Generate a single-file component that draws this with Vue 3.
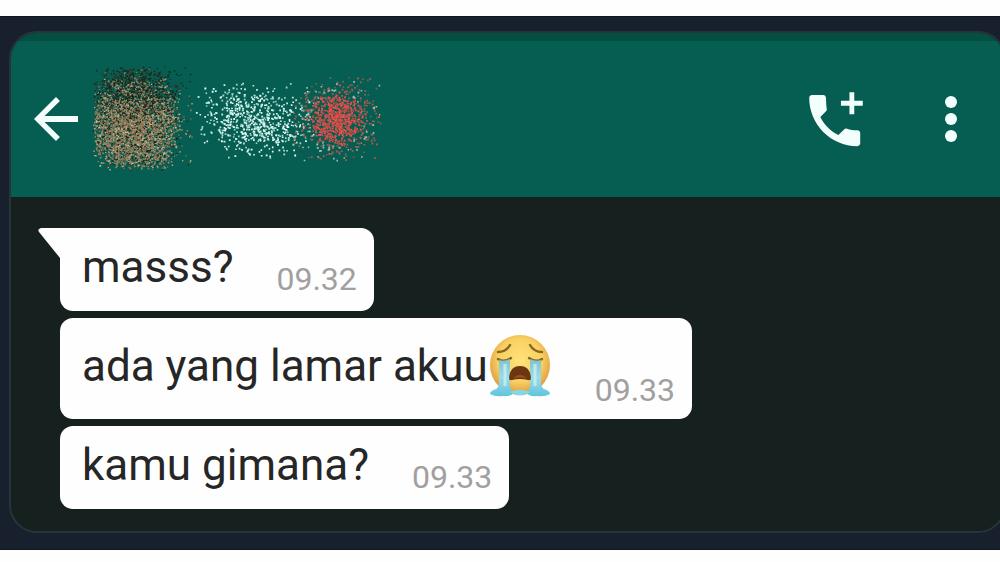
<script setup>
const messages = [
  { id: 1, text: 'masss?', time: '09.32', tail: true },
  { id: 2, text: 'ada yang lamar akuu', time: '09.33', crying: true },
  { id: 3, text: 'kamu gimana?', time: '09.33' }
]

// Seeded generator, so the scattered name looks the same on every load.
let seed = 90210
function random() {
  seed = (seed + 0x6d2b79f5) | 0
  let t = Math.imul(seed ^ (seed >>> 15), 1 | seed)
  t = (t + Math.imul(t ^ (t >>> 7), 61 | t)) ^ t
  return ((t ^ (t >>> 14)) >>> 0) / 4294967296
}
function normal() {
  return Math.sqrt(-2 * Math.log(1 - random())) * Math.cos(2 * Math.PI * random())
}

const layers = {}
function dot(color, x, y, size) {
  const s = size.toFixed(1)
  layers[color] = (layers[color] || '') + `M${x.toFixed(1)} ${y.toFixed(1)}h${s}v${s}h-${s}z`
}
function pick(list) {
  return list[Math.floor(random() * list.length)]
}

const dark = ['#17251c', '#0c3026', '#292a1d', '#3d3c2a']
const tan = ['#a98e6d', '#8c7a59', '#bd9876', '#7b7453', '#a77e5c', '#c9b08e']

// Avatar: dark at the top, skin tones below, thinning out to the right.
for (let i = 0; i < 6200; i++) {
  const x = 45 + normal() * 27
  const y = 60 + normal() * 33
  if (x < 3 + random() * 3 || x > 108 || y < 5 + random() * 4 || y > 109 - random() * 4) continue
  const dx = (x - 46) / 47
  const dy = (y - 57) / 53
  const edge = Math.abs(dx) ** 3 + Math.abs(dy) ** 3
  if (edge > 1 && random() < 0.72) continue
  if (edge > 0.65 && random() < 0.45) continue
  const darkness = 0.95 - (y - 8) / 66
  dot(random() < Math.max(darkness, 0.2) ? pick(dark) : pick(tan), x, y, 1.2 + random() * 0.5)
}
// Name
for (let i = 0; i < 660; i++) {
  const x = 103 + random() * 122 * 0.5 + random() * 122 * 0.5
  const y = 59 + (x - 161) * 0.08 + normal() * 17
  if (y < 19 || y > 97) continue
  dot(pick(['#d9f5ee', '#b4e0d5', '#9ad2c5', '#effffb']), x, y, 1.5 + random() * 0.4)
}
// Red mark
for (let i = 0; i < 980; i++) {
  const x = 247 + normal() * 18
  const y = 57 + normal() * 17
  if (x < 202 || x > 292 || y < 15 || y > 99) continue
  const far = Math.hypot(x - 247, y - 57) > 27
  dot(far ? pick(['#a8584e', '#7b6357', '#c05b54', '#9dbaaa']) : pick(['#ee4d4b', '#f3544f', '#dc4b47', '#b84d48']), x, y, 1.4 + random() * 0.5)
}
</script>

<template>
  <main class="page">
    <div class="backdrop">
      <section class="phone" aria-label="Chat">
        <div class="status"></div>
        <header class="bar">
          <button type="button" class="icon-button" aria-label="Back">
            <svg class="back" viewBox="0 0 24 24">
              <path d="M20 10.9H7.83l5.59-5.49L12 4l-8 8 8 8 1.41-1.41L7.83 13.1H20z" />
            </svg>
          </button>
          <svg class="contact" viewBox="0 0 300 116" aria-hidden="true">
            <path v-for="(d, color) in layers" :key="color" :d="d" :fill="color" />
          </svg>
          <div class="actions">
            <button type="button" class="icon-button" aria-label="Add call">
              <svg class="call" viewBox="0 0 24 24">
                <path d="M19.8 16c-1.250 0-2.450-.2-3.570-.57-.35-.11-.74-.03-1.020.24l-2 2c-2.830-1.440-4.950-3.550-6.390-6.390l2-2.010c.28-.26.36-.65.25-1C8.900 7.200 8.900 6.200 8.800 4.500c0-.55-.45-1-1-1H3.900c-.55 0-1 .45-1 1 0 9.390 7.610 17.100 17 17.100.55 0 1-.45 1-1V17c0-.55-.45-1-1-1z" />
                <path d="M17.100 2.600h1.700v3h3v1.700h-3v3h-1.700v-3h-3V5.600h3z" />
              </svg>
            </button>
            <button type="button" class="icon-button" aria-label="More options">
              <svg class="more" viewBox="0 0 24 60">
                <circle cx="12" cy="13" r="6" />
                <circle cx="12" cy="30" r="6" />
                <circle cx="12" cy="47" r="6" />
              </svg>
            </button>
          </div>
        </header>

        <div class="thread">
          <article
            v-for="message in messages"
            :key="message.id"
            class="bubble"
            :class="{ tail: message.tail, tall: message.crying }"
          >
            <svg v-if="message.tail" class="pointer" viewBox="0 0 34 30" aria-hidden="true">
              <path d="M34 0H3Q-1 1 1 4L22 30H34z" fill="#fefefe" />
            </svg>
            <p class="text">
              <span>{{ message.text }}</span>
              <svg v-if="message.crying" class="emoji" viewBox="0 0 64 64" role="img" aria-label="Loudly crying face">
                <defs>
                  <radialGradient id="face" cx=".5" cy=".42" r=".56">
                    <stop offset="0" stop-color="#ffe37a" />
                    <stop offset=".65" stop-color="#f8d062" />
                    <stop offset="1" stop-color="#e09c40" />
                  </radialGradient>
                  <linearGradient id="tear" x1="0" y1="0" x2="0" y2="1">
                    <stop offset="0" stop-color="#7fc3cd" />
                    <stop offset=".5" stop-color="#9cdce8" />
                    <stop offset="1" stop-color="#62c3dc" />
                  </linearGradient>
                </defs>
                <circle cx="32" cy="31" r="30" fill="url(#face)" />
                <g fill="none" stroke="#8a6526" stroke-width="2.5" stroke-linecap="round">
                  <path d="M10 18q8 0 12-7" />
                  <path d="M54 18q-8 0-12-7" />
                  <path d="M10 25q6 4 13-1" />
                  <path d="M54 25q-6 4-13-1" />
                </g>
                <path d="M11 26q5 2 11-1v27q0 4 5 6-4 5-12 4-8 1-13-2 0-3 6-5 3-2 3-6z" fill="url(#tear)" />
                <path d="M53 26q-5 2-11-1v27q0 4-5 6 4 5 12 4 8 1 13-2 0-3-6-5-3-2-3-6z" fill="url(#tear)" />
                <path d="M22 58q10-5 20 0-10 7-20 0z" fill="#8ad6e0" />
                <path d="M17 30v22M47 30v22" fill="none" stroke="#bdeaf1" stroke-width="3" />
                <path d="M21 44q1-12 11-12t11 12q0 3-3 2-8-2-16 0-3 1-3-2z" fill="#6b3710" />
                <path d="M25 44q7-6 14 0-7-1-14 0z" fill="#a14c21" />
              </svg>
            </p>
            <time class="time">{{ message.time }}</time>
          </article>
        </div>
      </section>
    </div>
  </main>
</template>

<style>
body {
  margin: 0;
  background: #fefefe;
}
</style>

<style scoped>
.page {
  box-sizing: border-box;
  display: flex;
  min-height: 100vh;
  padding: 16px 0 12px;
  font-family: Roboto, "Liberation Sans", sans-serif;
}

.backdrop {
  box-sizing: border-box;
  display: flex;
  flex: 1;
  overflow: hidden;
  padding: 14px 0 16px 9px;
  background: #17202c;
  border-top: 1px solid #10171d;
  border-bottom: 1px solid #10171d;
}

.phone {
  display: flex;
  flex: 1;
  flex-direction: column;
  overflow: hidden;
  margin-right: -6px;
  background: #16201e;
  border: 2px solid #26353a;
  border-radius: 28px;
}

.status {
  height: 8px;
  background: #034f41;
}

.bar {
  display: flex;
  align-items: center;
  height: 156px;
  padding: 0 41px 0 12px;
  background: #065e52;
}

.icon-button {
  display: block;
  padding: 0;
  background: none;
  border: 0;
  cursor: pointer;
}

.icon-button svg {
  display: block;
  fill: #f3fffc;
}

.back {
  width: 66px;
  height: 66px;
}

.contact {
  width: 300px;
  height: 116px;
}

.actions {
  display: flex;
  align-items: center;
  gap: 70px;
  margin-left: auto;
}

.call {
  width: 68px;
  height: 68px;
}

.more {
  width: 24px;
  height: 60px;
}

.thread {
  display: flex;
  flex: 1;
  flex-direction: column;
  align-items: flex-start;
  gap: 7px;
  padding: 30px 48px 20px 49px;
  border-top: 1px solid #08241d;
}

.bubble {
  position: relative;
  display: flex;
  align-items: flex-end;
  gap: 43px;
  padding: 13px 17px 16px 22px;
  background: #fefefe;
  border-radius: 13px;
}

.tail {
  border-top-left-radius: 0;
}

.pointer {
  position: absolute;
  top: 0;
  left: -22px;
  width: 34px;
  height: 30px;
}

.text {
  display: flex;
  align-items: center;
  margin: 0 0 2px;
  color: #262626;
  font-size: 44px;
  line-height: 52px;
}

.tall {
  padding-bottom: 13px;
}

.tall .text {
  margin-bottom: 5px;
}

.emoji {
  width: 64px;
  height: 64px;
  padding: 3px 0;
}

.time {
  color: #a0a0a0;
  font-size: 32px;
  line-height: 32px;
}
</style>
